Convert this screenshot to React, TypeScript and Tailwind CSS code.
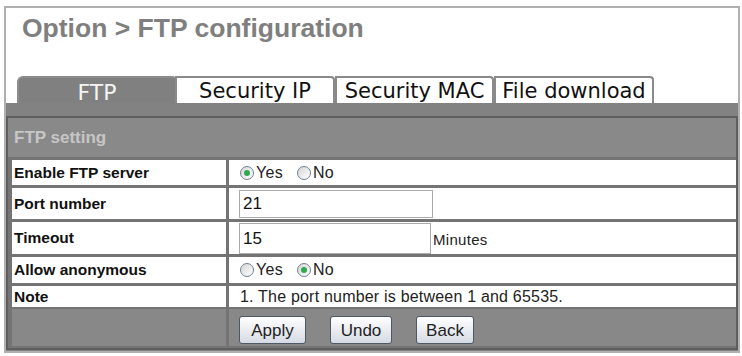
import React from 'react';

const tabs = [
  { label: 'FTP', active: true, w: 'w-[158px]' },
  { label: 'Security IP', active: false, w: 'w-[160px]' },
  { label: 'Security MAC', active: false, w: 'w-[159px]' },
  { label: 'File download', active: false, w: 'w-[160px]' },
];

const Radio: React.FC<{ checked?: boolean; label: string }> = ({ checked, label }) => (
  <label className="flex items-center mr-[14px]">
    <span className="flex items-center justify-center w-[14px] h-[14px] rounded-full border border-[#6f8296] bg-gradient-to-br from-[#d6d6d6] to-white">
      {checked ? <span className="w-[6px] h-[6px] rounded-full bg-[#2fa84f]" /> : null}
    </span>
    <span className="ml-[2px] text-[16px] tracking-[0.3px] text-[#222]">{label}</span>
  </label>
);

const Btn: React.FC<{ label: string; w: string }> = ({ label, w }) => (
  <button
    className={`${w} h-[28px] rounded-[3px] border border-[#4c5866] bg-gradient-to-b from-white to-[#d6dae3] text-[17px] text-[#222] leading-none`}
  >
    {label}
  </button>
);

const Label: React.FC<{ text: string }> = ({ text }) => (
  <div className="bg-white flex items-center pl-[2px] text-[15.5px] font-bold text-[#111]">
    {text}
  </div>
);

export default function App() {
  return (
    <div
      className="w-[742px] h-[356px] bg-white pt-[6px] pl-[4px]"
      style={{ fontFamily: '"Liberation Sans", Arial, sans-serif' }}
    >
      <div className="w-[736px] h-[347px] border-2 border-[#b0b0b0] flex flex-col">
        {/* title */}
        <div className="h-[68px] pl-[16px] pt-[5px]">
          <h1 className="text-[26.5px] leading-[30px] font-bold text-[#7f7f7f]">
            Option &gt; FTP configuration
          </h1>
        </div>

        {/* tabs */}
        <div
          className="flex h-[27px] pl-[11px]"
          style={{ fontFamily: '"DejaVu Sans", Verdana, sans-serif' }}
        >
          {tabs.map((t) =>
            t.active ? (
              <div
                key={t.label}
                className={`${t.w} h-[27px] bg-[#808080] rounded-tl-[6px] rounded-tr-[2px] border-t-2 border-l-2 border-[#8c8c8c] flex justify-center pt-[2px] text-[22px] leading-[25px] text-[#f4f4f4]`}
              >
                {t.label}
              </div>
            ) : (
              <div
                key={t.label}
                className={`${t.w} h-[27px] bg-white rounded-tr-[4px] border-t-2 border-l-2 border-r-2 border-[#8a8a8a] flex justify-center pt-[1px] text-[21px] leading-[25px] text-[#111] whitespace-nowrap`}
              >
                {t.label}
              </div>
            )
          )}
        </div>

        {/* gray panel */}
        <div className="flex-1 bg-[#828282] pt-[13px]">
          <div className="h-[234px] border-2 border-[#5e5e5e] bg-[#747474] flex flex-col">
            <div className="h-[39px] bg-[#898989] flex items-center pl-[6px] text-[17px] font-bold text-[#c6c6c6]">
              FTP setting
            </div>
            <div className="grid grid-cols-[214px_1fr] grid-rows-[25px_31px_32px_26px_21px] gap-[3px] pl-[4px] pt-[3px]">
              <Label text="Enable FTP server" />
              <div className="bg-white flex items-center pl-[11px]">
                <Radio checked label="Yes" />
                <Radio label="No" />
              </div>

              <Label text="Port number" />
              <div className="bg-white pl-[10px] pt-[2px]">
                <div className="w-[194px] h-[28px] border border-[#ababab] flex items-center pl-[3px] text-[17px] text-[#111]">
                  21
                </div>
              </div>

              <Label text="Timeout" />
              <div className="bg-white pl-[10px] pt-[1px] flex items-end">
                <div className="w-[192px] h-[31px] border border-[#ababab] flex items-center pl-[3px] text-[17px] text-[#111]">
                  15
                </div>
                <span className="ml-[2px] mb-[3px] text-[15px] tracking-[0.3px] text-[#222]">Minutes</span>
              </div>

              <Label text="Allow anonymous" />
              <div className="bg-white flex items-center pl-[11px]">
                <Radio label="Yes" />
                <Radio checked label="No" />
              </div>

              <Label text="Note" />
              <div className="bg-white flex items-center pl-[11px] text-[16px] tracking-[0.2px] text-[#222]">
                1. The port number is between 1 and 65535.
              </div>
            </div>
            <div className="grid grid-cols-[214px_1fr] gap-[3px] pl-[4px] pt-[2px] h-[39px]">
              <div className="bg-[#888888]" />
              <div className="bg-[#888888] flex items-start gap-[24px] pl-[10px] pt-[7px]">
                <Btn label="Apply" w="w-[67px]" />
                <Btn label="Undo" w="w-[62px]" />
                <Btn label="Back" w="w-[58px]" />
              </div>
            </div>
          </div>
        </div>
      </div>
    </div>
  );
}
